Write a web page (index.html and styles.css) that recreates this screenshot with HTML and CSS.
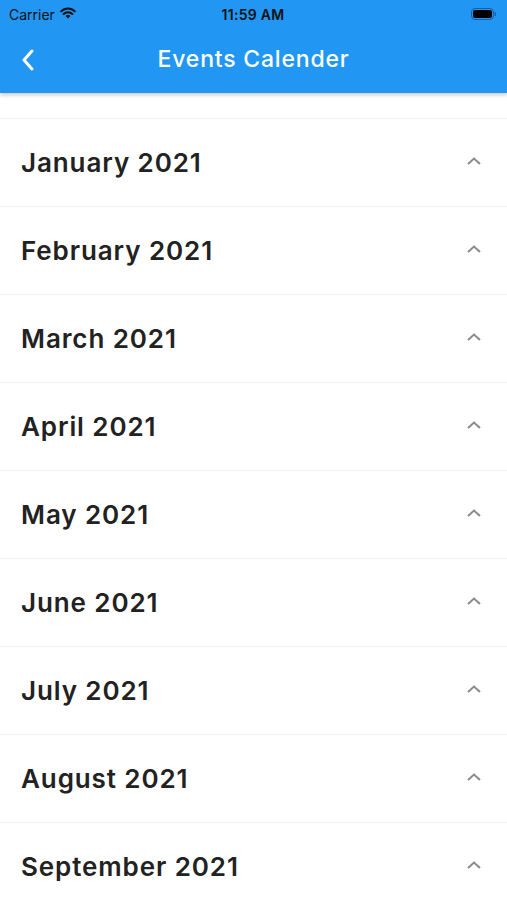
FILE: index.html
```html
<!DOCTYPE html>
<html>
<head>
<meta charset="utf-8">
<link rel="stylesheet" href="styles.css">
</head>
<body>
<div class="header">
  <div class="status">
    <div class="status-left">
      <span class="carrier">Carrier</span>
      <svg class="wifi" width="16" height="12" viewBox="0 0 16 12"><path d="M8 11.5 L5.6 9 A3.4 3.4 0 0 1 10.4 9 Z" fill="#111"/><path d="M3.6 7 A6.2 6.2 0 0 1 12.4 7" stroke="#111" stroke-width="2" fill="none" stroke-linecap="round"/><path d="M1.2 4.4 A9.6 9.6 0 0 1 14.8 4.4" stroke="#111" stroke-width="2" fill="none" stroke-linecap="round"/></svg>
    </div>
    <div class="time">11:59 AM</div>
    <div class="status-right">
      <svg width="26" height="12" viewBox="0 0 26 12"><rect x="0.5" y="0.5" width="22" height="11" rx="3.5" fill="none" stroke="#1a5fa6" stroke-width="1"/><rect x="2" y="2" width="19" height="8" rx="2" fill="#000"/><rect x="23.5" y="4" width="1.5" height="4" rx="0.7" fill="#1a5fa6"/></svg>
    </div>
  </div>
  <div class="appbar">
    <svg class="back" width="14" height="22" viewBox="0 0 14 22"><path d="M11 2 L3 11 L11 20" stroke="#fff" stroke-width="3" fill="none" stroke-linecap="round" stroke-linejoin="round"/></svg>
    <div class="title">Events Calender</div>
  </div>
</div>
<div class="list">
  <div class="row"><span class="label">January 2021</span><svg class="chev" width="16" height="10" viewBox="0 0 16 10"><path d="M2 8 L8 2.5 L14 8" stroke="#8a8a8a" stroke-width="2" fill="none"/></svg></div>
  <div class="row"><span class="label">February 2021</span><svg class="chev" width="16" height="10" viewBox="0 0 16 10"><path d="M2 8 L8 2.5 L14 8" stroke="#8a8a8a" stroke-width="2" fill="none"/></svg></div>
  <div class="row"><span class="label">March 2021</span><svg class="chev" width="16" height="10" viewBox="0 0 16 10"><path d="M2 8 L8 2.5 L14 8" stroke="#8a8a8a" stroke-width="2" fill="none"/></svg></div>
  <div class="row"><span class="label">April 2021</span><svg class="chev" width="16" height="10" viewBox="0 0 16 10"><path d="M2 8 L8 2.5 L14 8" stroke="#8a8a8a" stroke-width="2" fill="none"/></svg></div>
  <div class="row"><span class="label">May 2021</span><svg class="chev" width="16" height="10" viewBox="0 0 16 10"><path d="M2 8 L8 2.5 L14 8" stroke="#8a8a8a" stroke-width="2" fill="none"/></svg></div>
  <div class="row"><span class="label">June 2021</span><svg class="chev" width="16" height="10" viewBox="0 0 16 10"><path d="M2 8 L8 2.5 L14 8" stroke="#8a8a8a" stroke-width="2" fill="none"/></svg></div>
  <div class="row"><span class="label">July 2021</span><svg class="chev" width="16" height="10" viewBox="0 0 16 10"><path d="M2 8 L8 2.5 L14 8" stroke="#8a8a8a" stroke-width="2" fill="none"/></svg></div>
  <div class="row"><span class="label">August 2021</span><svg class="chev" width="16" height="10" viewBox="0 0 16 10"><path d="M2 8 L8 2.5 L14 8" stroke="#8a8a8a" stroke-width="2" fill="none"/></svg></div>
  <div class="row"><span class="label">September 2021</span><svg class="chev" width="16" height="10" viewBox="0 0 16 10"><path d="M2 8 L8 2.5 L14 8" stroke="#8a8a8a" stroke-width="2" fill="none"/></svg></div>
</div>
</body>
</html>
```
FILE: styles.css
```css
html, body {
  margin: 0;
  padding: 0;
  background: #fff;
  font-family: Inter, "Liberation Sans", Arial, sans-serif;
  overflow: hidden;
}
.header {
  background: #2196f3;
  box-shadow: 0 2px 4px rgba(0,0,0,0.22);
  position: relative;
  z-index: 1;
}
.status {
  height: 28px;
  display: grid;
  grid-template-columns: 1fr auto 1fr;
  align-items: center;
  padding: 0 10px 0 9px;
}
.status-left {
  display: flex;
  align-items: center;
  gap: 5px;
}
.carrier {
  font-size: 14px;
  color: #111;
}
.wifi { margin-top: -2px; }
.time {
  font-size: 14px;
  font-weight: 600;
  color: #111;
  letter-spacing: 0.3px;
}
.status-right {
  display: flex;
  justify-content: flex-end;
}
.appbar {
  height: 65px;
  position: relative;
  display: flex;
  align-items: center;
  justify-content: center;
}
.back {
  position: absolute;
  left: 21px;
  top: 21px;
}
.title {
  color: #fff;
  font-size: 23px;
  font-weight: 500;
  margin-top: -3px;
  letter-spacing: 0.8px;
}
.list {
  padding-top: 25px;
}
.row {
  height: 87px;
  border-top: 1px solid #f2f2f2;
  display: flex;
  align-items: center;
  justify-content: space-between;
  padding: 0 25px 0 21px;
}
.label {
  font-size: 26px;
  font-weight: 600;
  color: #222;
  letter-spacing: 0.9px;
}
.chev {
  margin-top: -3px;
}
```
